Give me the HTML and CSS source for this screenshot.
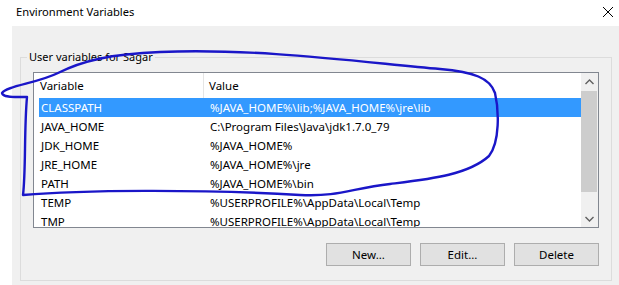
FILE: index.html
```html
<!DOCTYPE html>
<html lang="en">
<head>
    <meta charset="UTF-8">
    <title>Environment Variables</title>
    <link rel="stylesheet" href="styles.css">
</head>
<body>
    <div class="window">
        <div class="titlebar">
            <span class="title">Environment Variables</span>
            <svg class="close" width="12" height="12" viewBox="0 0 12 12">
                <path d="M1 1 L11 11 M11 1 L1 11" stroke="#000" stroke-width="1" fill="none"/>
            </svg>
        </div>

        <div class="dialog">
            <fieldset class="group">
                <legend>User variables for Sagar</legend>

                <div class="listview">
                    <div class="list-body">
                        <div class="list-head">
                            <div class="head-var">Variable</div>
                            <div class="head-val">Value</div>
                        </div>
                        <div class="row selected">
                            <div class="cell-var">CLASSPATH</div>
                            <div class="cell-val">%JAVA_HOME%\lib;%JAVA_HOME%\jre\lib</div>
                        </div>
                        <div class="row">
                            <div class="cell-var">JAVA_HOME</div>
                            <div class="cell-val">C:\Program Files\Java\jdk1.7.0_79</div>
                        </div>
                        <div class="row">
                            <div class="cell-var">JDK_HOME</div>
                            <div class="cell-val">%JAVA_HOME%</div>
                        </div>
                        <div class="row">
                            <div class="cell-var">JRE_HOME</div>
                            <div class="cell-val">%JAVA_HOME%\jre</div>
                        </div>
                        <div class="row">
                            <div class="cell-var">PATH</div>
                            <div class="cell-val">%JAVA_HOME%\bin</div>
                        </div>
                        <div class="row">
                            <div class="cell-var">TEMP</div>
                            <div class="cell-val">%USERPROFILE%\AppData\Local\Temp</div>
                        </div>
                        <div class="row">
                            <div class="cell-var">TMP</div>
                            <div class="cell-val">%USERPROFILE%\AppData\Local\Temp</div>
                        </div>
                    </div>

                    <div class="scrollbar">
                        <div class="arrow">
                            <svg width="9" height="6" viewBox="0 0 9 6"><path d="M0.5 5 L4.5 1 L8.5 5" stroke="#606060" stroke-width="1.4" fill="none"/></svg>
                        </div>
                        <div class="track"><div class="thumb"></div></div>
                        <div class="arrow">
                            <svg width="9" height="6" viewBox="0 0 9 6"><path d="M0.5 1 L4.5 5 L8.5 1" stroke="#606060" stroke-width="1.4" fill="none"/></svg>
                        </div>
                    </div>
                </div>

                <div class="buttons">
                    <button>New...</button>
                    <button>Edit...</button>
                    <button>Delete</button>
                </div>
            </fieldset>
        </div>

        <!-- hand drawn marker around the java entries -->
        <svg class="annotation" width="619" height="285" viewBox="0 0 619 285">
            <path d="M27 97 C24 130 26 170 23 195 C80 190 200 189 300 195 C340 197 352 188 390 184 C430 179 468 175 489 156 C500 142 499 110 495 93 C490 78 474 72 440 69 C360 62 260 48 160 52 C110 54 82 61 58 73 C38 83 6 86 2 93 C3 98 15 97 27 97" stroke="#1a16c8" stroke-width="2.4" fill="none" stroke-linecap="round" stroke-linejoin="round"/>
        </svg>
    </div>
</body>
</html>
```

FILE: styles.css
```css
* {
    margin: 0;
    padding: 0;
    box-sizing: border-box;
}

body {
    width: 619px;
    height: 285px;
    overflow: hidden;
    background: #fff;
    font-family: 'Noto Sans', 'Open Sans', sans-serif;
    font-size: 11.5px;
    color: #000;
}

.window {
    position: relative;
    width: 619px;
    height: 285px;
}

.titlebar {
    height: 26px;
    display: flex;
    align-items: center;
    justify-content: space-between;
    padding: 0 5px 4px 16px;
    background: #fff;
}

.title {
    font-size: 11.2px;
}

.close {
    margin-top: 2px;
}

.dialog {
    margin-left: 12px;
    height: 259px;
    background: #f0f0f0;
    padding: 23px 7px 0 8px;
}

.group {
    border: 1px solid #dcdcdc;
    padding: 7px 12px 14px 12px;
    height: 232px;
}

.group legend {
    margin-left: -6px;
    padding: 0 2px;
    line-height: 16px;
    font-size: 11px;
}

.listview {
    display: flex;
    height: 156px;
    border: 1px solid #828790;
    background: #fff;
}

.list-body {
    flex: 1;
    overflow: hidden;
}

.list-head {
    display: flex;
    height: 25px;
    align-items: center;
}

.head-var {
    width: 170px;
    padding-left: 6px;
    height: 100%;
    display: flex;
    align-items: center;
    border-right: 1px solid #e5e5e5;
}

.head-val {
    padding-left: 5px;
}

.row {
    display: flex;
    height: 19px;
    align-items: center;
    margin-left: 5px;
    white-space: nowrap;
}

.row.selected {
    background: #3399ff;
    color: #fff;
}

.cell-var {
    width: 164px;
    padding-left: 2px;
}

.cell-val {
    padding-left: 7px;
}

.scrollbar {
    width: 17px;
    display: flex;
    flex-direction: column;
    background: #f0f0f0;
}

.arrow {
    height: 17px;
    display: flex;
    align-items: center;
    justify-content: center;
}

.track {
    flex: 1;
    padding: 1px 1px 0 0;
}

.thumb {
    height: 101px;
    background: #cdcdcd;
}

.buttons {
    display: flex;
    justify-content: flex-end;
    gap: 9px;
    margin-top: 15px;
}

.buttons button {
    width: 85px;
    height: 23px;
    background: #e1e1e1;
    border: 1px solid #adadad;
    font-family: 'Noto Sans', 'Open Sans', sans-serif;
    font-size: 11.5px;
    color: #000;
}

.annotation {
    position: absolute;
    left: 0;
    top: 0;
    pointer-events: none;
}
```
